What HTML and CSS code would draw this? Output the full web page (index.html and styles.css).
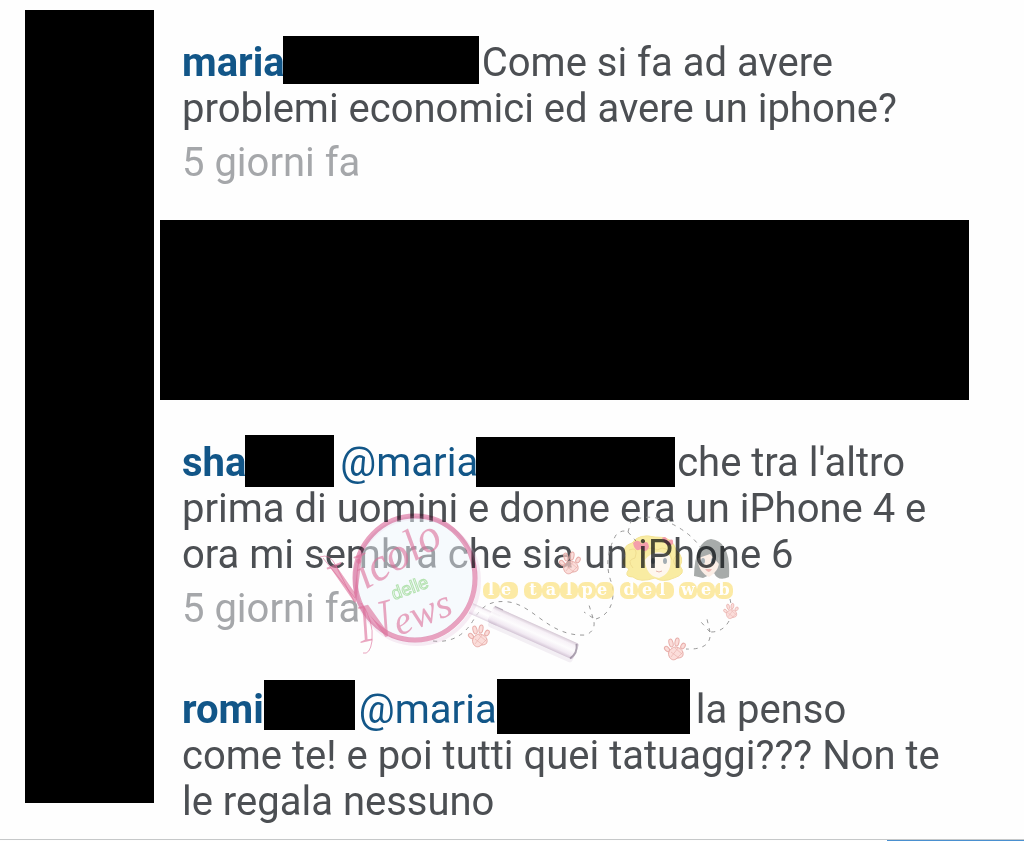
FILE: index.html
```html
<!DOCTYPE html>
<html lang="it">
<head>
<meta charset="utf-8">
<meta name="viewport" content="width=device-width, initial-scale=1">
<title>Commenti</title>
<link rel="stylesheet" href="styles.css">
</head>
<body>
<div class="page">
  <div class="avatars"></div>
  <main class="comments">
    <article class="comment">
      <p class="text"><a class="user" href="#">maria</a><span class="redact redact-a"></span>Come si fa ad avere<br>problemi economici ed avere un iphone?</p>
      <time class="time">5 giorni fa</time>
    </article>
    <div class="hidden-comment"></div>
    <article class="comment comment-marked">
      <p class="text"><a class="user" href="#">sha</a><span class="redact redact-b"></span><a class="mention" href="#">@maria</a><span class="redact redact-c"></span>che tra l'altro<br>prima di uomini e donne era un iPhone 4 e<br>ora mi sembra che sia un iPhone 6</p>
      <time class="time">5 giorni fa</time>
      <svg class="watermark" width="440" height="170" viewBox="310 500 440 170" role="img" aria-label="Vicolo delle News, le talpe del web">
        <defs>
          <linearGradient id="handle" x1="0" y1="0" x2="0" y2="1">
            <stop offset="0" stop-color="#c9b8c8"/>
            <stop offset=".2" stop-color="#f8f2f8"/>
            <stop offset=".5" stop-color="#ffffff"/>
            <stop offset=".8" stop-color="#f1e8f2"/>
            <stop offset="1" stop-color="#cbbacd"/>
          </linearGradient>
          <g id="paw" fill="#f9cfca" fill-opacity=".7" stroke="#e8aeaa" stroke-width="1">
            <path d="M-6 7C-8 3-4-1 0-2C5-2 9 2 8 6C7 10 3 8 1 10C-2 12-5 10-6 7Z"/>
            <ellipse cx="-8" cy="0" rx="2" ry="3" transform="rotate(-45 -8 0)"/>
            <ellipse cx="-4" cy="-6" rx="2" ry="4" transform="rotate(-15 -4 -6)"/>
            <ellipse cx="2" cy="-7" rx="2" ry="4" transform="rotate(10 2 -7)"/>
            <ellipse cx="8" cy="-3" rx="2" ry="3" transform="rotate(30 8 -3)"/>
            <path d="M-4 3L4 9M0-1L7 5M-4 8L3-1M1 10L8 3" fill="none" stroke-width=".6"/>
          </g>
        </defs>

        <g class="trail">
          <path d="M433 641Q460 644 474 619C483 604 493 600 509 602C535 606 549 637 586 635C597 630 594 621 593 618M593 618L584 612M593 618L589 605M596 619C612 614 615 598 612 584Q602 560 616 535Q622 529 628 532M628 532L636 541M628 532L631 521Q650 513 668 522Q690 532 700 547"/>
          <path d="M730 599L731 604M729 621Q723 632 711 632M710 632L701 622M710 632L707 619M710 637Q708 650 686 649"/>
        </g>

        <g transform="rotate(24 478 612)">
          <rect x="470" y="606" width="30" height="11" fill="url(#handle)" opacity=".6"/>
          <rect x="492" y="602" width="92" height="19" rx="3" fill="#c9b6cc" opacity=".2"/>
          <rect x="490" y="600" width="94" height="17" rx="3" fill="url(#handle)" opacity=".8"/>
          <path d="M581 601Q586 609 581 617" fill="none" stroke="#8c7f91" stroke-width="2" opacity=".7"/>
          <path d="M491 600H500" stroke="#8c7f91" stroke-width="1" opacity=".6"/>
        </g>

        <ellipse cx="417" cy="581" rx="62" ry="63" fill="none" stroke="#d9a6cf" stroke-width="4" opacity=".2"/>
        <ellipse cx="415" cy="578" rx="58" ry="60" fill="#eef5fb" fill-opacity=".5"/>
        <ellipse class="rim" cx="415" cy="578" rx="60" ry="62"/>

        <g class="script">
          <text x="339" y="608" font-size="64" transform="rotate(-22 339 608)">V</text>
          <text x="365" y="590" font-size="46" transform="rotate(-30 365 590)">icolo</text>
          <text x="361" y="643" font-size="54" transform="rotate(-14 361 643)">N</text>
          <text x="399" y="636" font-size="40" transform="rotate(-22 399 636)">ews</text>
          <path d="M320 557Q330 553 336 566L354 601M323 558L355 598M361 603Q374 620 372 641Q370 655 363 653"/>
        </g>
        <text class="delle" x="394" y="600" transform="rotate(-20 394 600)">delle</text>

        <g class="faces">
          <g opacity=".62">
            <path d="M629 569Q619 564 626 556Q621 546 632 543Q639 533 655 537Q673 536 676 550Q685 558 680 566Q687 574 674 578Q663 583 655 578Q640 583 633 577Q623 577 629 569Z" fill="#f7e36b" stroke="#efd45c"/>
            <path d="M645 560Q655 547 670 556Q673 573 659 578Q646 576 645 560Z" fill="#fff4e6"/>
            <path d="M642 558Q648 543 657 550Q668 543 672 560M629 550Q639 546 635 558Q626 560 633 568M678 554Q669 561 678 568" fill="none" stroke="#e8c94d" stroke-width="1"/>
            <path d="M633 543Q638 538 642 544Q648 539 649 547Q646 554 641 549Q635 553 633 543ZM662 538Q666 535 668 541Q674 537 673 544Q667 549 662 538Z" fill="#ef6479"/>
            <ellipse cx="653" cy="561" rx="2" ry="3" fill="#6d7d86"/>
            <ellipse cx="665" cy="561" rx="2" ry="3" fill="#6d7d86"/>
            <path d="M656 571Q659 573 662 571" fill="none" stroke="#da8c7b"/>
          </g>
          <g opacity=".6">
            <path d="M694 576Q695 541 711 539Q731 541 729 577Q718 582 714 573L703 578Z" fill="#6f7573"/>
            <path d="M698 557Q710 548 718 557Q722 569 709 577Q697 571 698 557Z" fill="#fbe4d8"/>
            <path d="M696 559Q700 547 713 549Q719 552 719 564L710 554Z" fill="#6f7573"/>
            <ellipse cx="703" cy="561" rx="2" ry="3" fill="#6d7d86"/>
            <ellipse cx="713" cy="561" rx="2" ry="3" fill="#6d7d86"/>
            <path d="M705 569Q709 575 712 569Z" fill="#e78b83"/>
          </g>
        </g>

        <g class="beads">
          <rect x="483" y="582" width="17" height="17" rx="7"/><rect x="500" y="582" width="18" height="17" rx="7"/>
          <rect x="524" y="582" width="18" height="17" rx="7"/><rect x="542" y="582" width="18" height="17" rx="7"/><rect x="560" y="582" width="18" height="17" rx="7"/><rect x="578" y="582" width="18" height="17" rx="7"/><rect x="596" y="582" width="18" height="17" rx="7"/>
          <rect x="620" y="582" width="18" height="17" rx="7"/><rect x="638" y="582" width="18" height="17" rx="7"/><rect x="656" y="582" width="18" height="17" rx="7"/>
          <rect x="679" y="582" width="18" height="17" rx="7"/><rect x="697" y="582" width="18" height="17" rx="7"/><rect x="715" y="582" width="18" height="17" rx="7"/>
        </g>
        <text class="bead-text" y="595"><tspan x="491">l</tspan><tspan x="509">e</tspan> <tspan x="533">t</tspan><tspan x="551">a</tspan><tspan x="569">l</tspan><tspan x="587">p</tspan><tspan x="605">e</tspan> <tspan x="629">d</tspan><tspan x="647">e</tspan><tspan x="665">l</tspan> <tspan x="688">w</tspan><tspan x="706">e</tspan><tspan x="724">b</tspan></text>

        <use href="#paw" x="570" y="563"/>
        <use href="#paw" x="479" y="636"/>
        <use href="#paw" x="675" y="649"/>
        <use href="#paw" transform="translate(731 611) scale(.7)"/>
      </svg>
    </article>
    <article class="comment comment-last">
      <p class="text"><a class="user" href="#">romi</a><span class="redact redact-d"></span><a class="mention" href="#">@maria</a><span class="redact redact-e"></span>la penso<br>come te! e poi tutti quei tatuaggi??? Non te<br>le regala nessuno</p>
    </article>
  </main>
</div>
<div class="bottom-bar"><div class="bottom-accent"></div></div>
</body>
</html>
```
FILE: styles.css
```css
* {
  box-sizing: border-box;
}

body {
  margin: 0;
  height: 100vh;
  overflow: hidden;
  background: #fefefe;
  color: #4c4f53;
  font-family: Roboto, "Liberation Sans", sans-serif;
  font-size: 40px;
  line-height: 46px;
}

.page {
  display: flex;
  align-items: stretch;
  gap: 6px;
  height: 100%;
  padding: 10px 55px 0 25px;
}

.avatars {
  flex: 0 0 129px;
  margin-bottom: 38px;
  background: #000;
}

.comments {
  flex: 1;
  min-width: 0;
  padding-top: 30px;
}

.comment {
  position: relative;
  padding-left: 22px;
}

.text {
  margin: 0;
  white-space: nowrap;
}

.user,
.mention {
  color: #125688;
  text-decoration: none;
}

.user {
  font-weight: 700;
}

.time {
  display: block;
  margin-top: 8px;
  color: #a5a7aa;
}

.redact {
  display: inline-block;
  vertical-align: top;
  background: #000;
}

.redact-a {
  width: 196px;
  height: 48px;
  margin: -4px 3px -10px -2px;
}

.redact-b {
  width: 89px;
  height: 52px;
  margin: -5px 6px -10px -1px;
}

.redact-c {
  width: 199px;
  height: 50px;
  margin: -3px 2px -10px -2px;
}

.redact-d {
  width: 91px;
  height: 50px;
  margin: -7px 4px -10px 0;
}

.redact-e {
  width: 193px;
  height: 55px;
  margin: -8px 6px -10px 0;
}

.hidden-comment {
  height: 180px;
  margin: 34px 0 40px;
  background: #000;
}

.comment-last {
  margin-top: 55px;
}

.watermark {
  position: absolute;
  top: 60px;
  left: 150px;
}

.trail {
  fill: none;
  stroke: #999;
  stroke-width: 1;
  stroke-dasharray: 4 5;
}

.rim {
  fill: none;
  stroke: #e9a3c1;
  stroke-width: 5;
  mix-blend-mode: multiply;
}

.script {
  fill: #dc6c98;
  fill-opacity: .6;
  font-family: "Liberation Serif", serif;
  font-style: italic;
}

.script path {
  fill: none;
  stroke: #dc6c98;
  stroke-opacity: .6;
  stroke-width: 1;
}

.delle {
  fill: none;
  stroke: #b4e2b0;
  stroke-width: 1;
  font-family: "Liberation Sans", sans-serif;
  font-size: 18px;
}

.faces {
  mix-blend-mode: multiply;
}

.beads {
  fill: #fbe58f;
  fill-opacity: .8;
}

.bead-text {
  fill: #fff;
  font-family: "DejaVu Serif", serif;
  font-size: 16px;
  font-weight: 700;
  text-anchor: middle;
}

.bottom-bar {
  position: fixed;
  right: 0;
  bottom: 0;
  left: 0;
  height: 2px;
  border-top: 1px solid #c6c8c9;
  background: #fefefe;
}

.bottom-accent {
  width: 137px;
  height: 1px;
  margin-left: auto;
  background: #4a90d0;
}
```
